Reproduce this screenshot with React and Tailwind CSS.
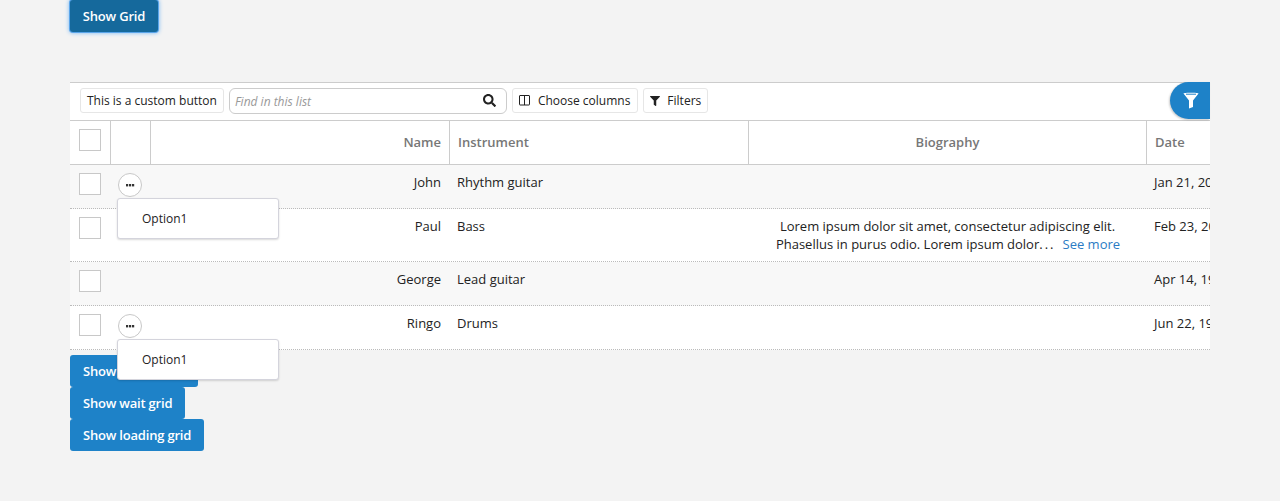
import { FaFilter, FaSearch } from 'react-icons/fa';

const ROWS = [
  { name: 'John', instrument: 'Rhythm guitar', date: 'Jan 21, 2014', menu: true, height: 'h-[44px]', bg: 'bg-[#f8f8f8]' },
  { name: 'Paul', instrument: 'Bass', date: 'Feb 23, 2014', bio: true, height: 'h-[53px]', bg: 'bg-white' },
  { name: 'George', instrument: 'Lead guitar', date: 'Apr 14, 1943', height: 'h-[44px]', bg: 'bg-[#f8f8f8]' },
  { name: 'Ringo', instrument: 'Drums', date: 'Jun 22, 1940', menu: true, height: 'h-[44px]', bg: 'bg-white' },
];

function ToolButton({ children }) {
  return (
    <button
      type="button"
      className="h-[25px] flex items-center rounded-[3px] border border-[#e6e6e6] bg-white px-[6px] text-[12px] text-[#222] whitespace-nowrap"
    >
      {children}
    </button>
  );
}

function Checkbox() {
  return <span className="block w-[22px] h-[22px] border border-[#c8c8c8] bg-white" />;
}

function RowMenu() {
  return (
    <>
      <button
        type="button"
        className="absolute left-[7px] top-[8px] w-[24px] h-[24px] flex items-center justify-center rounded-full border border-[#c8c8c8] bg-white"
      >
        <svg width="10" height="4" viewBox="0 0 10 4" fill="#333">
          <rect x="1" y="1" width="2.2" height="2.4" />
          <rect x="4" y="1" width="2.2" height="2.4" />
          <rect x="7" y="1" width="2.2" height="2.4" />
        </svg>
      </button>
      <div className="absolute z-10 left-[6px] top-[33px] w-[162px] h-[41px] flex items-center pl-[24px] rounded-[3px] border border-[#d4d4dc] bg-white text-[12px] text-[#222] shadow-[0_1px_2px_rgba(0,0,0,0.15)]">
        Option1
      </div>
    </>
  );
}

function HeaderCell({ className, children }) {
  return (
    <div className={`h-full flex items-center border-r border-[#ccc] text-[13px] font-semibold text-[#777] ${className}`}>
      {children}
    </div>
  );
}

export default function App() {
  return (
    <div className="min-h-[501px] bg-[#f3f3f3] pl-[70px] font-['Open_Sans',sans-serif]">
      <button
        type="button"
        className="block h-[32px] w-[88px] pt-px rounded-[3px] bg-[#15699c] text-[13px] font-semibold tracking-[-0.2px] text-white shadow-[0_0_0_1px_#5aa5ea,0_0_4px_1px_#7ab8f2]"
      >
        Show Grid
      </button>

      <div className="mt-[50px] w-[1140px]">
        {/* toolbar */}
        <div className="h-[39px] flex items-start gap-[5px] border-y border-[#ccc] bg-white pl-[10px] pt-[5px]">
          <ToolButton>This is a custom button</ToolButton>
          <div className="w-[278px] h-[26px] flex items-center justify-between rounded-[6px] border border-[#ccc] bg-white pl-[5px] pr-[10px]">
            <span className="pt-[2px] text-[12px] italic text-[#999]">Find in this list</span>
            <FaSearch size={13} color="#222" className="-mt-[2px]" />
          </div>
          <ToolButton>
            <svg width="12" height="11" viewBox="0 0 12 11" fill="none" stroke="#222" className="mr-[7px]">
              <rect x="0.5" y="0.5" width="10" height="9.5" rx="0.5" />
              <path d="M5.5 0.5V10" />
            </svg>
            <span className="pr-px">Choose columns</span>
          </ToolButton>
          <ToolButton>
            <FaFilter size={10} color="#222" className="mr-[7px]" />
            Filters
          </ToolButton>
          <button
            type="button"
            className="ml-auto -mt-[6px] w-[40px] h-[37px] flex items-center justify-center rounded-l-full bg-[#1e82c8] shadow-[-1px_1px_2px_rgba(0,0,0,0.2)]"
          >
            <svg width="16" height="17" viewBox="0 0 16 17" className="ml-[2px]">
              <path d="M0.5 1.5C0.5 0.5 15.5 0.5 15.5 1.5L10 8.5V15L6 16.5V8.5Z" fill="white" />
              <path d="M3 2.2H13" stroke="#1e82c8" strokeWidth="1" />
            </svg>
          </button>
        </div>

        {/* header */}
        <div className="h-[44px] flex border-b border-[#ccc] bg-white">
          <div className="w-[41px] h-full pl-[9px] pt-[8px] border-r border-[#ccc]">
            <Checkbox />
          </div>
          <HeaderCell className="w-[40px]" />
          <HeaderCell className="w-[299px] justify-end pr-[8px]">Name</HeaderCell>
          <HeaderCell className="w-[299px] pl-[8px]">Instrument</HeaderCell>
          <HeaderCell className="w-[398px] justify-center">Biography</HeaderCell>
          <div className="w-[63px] h-full flex items-center pl-[8px] text-[13px] font-semibold text-[#777]">Date</div>
        </div>

        {/* rows */}
        {ROWS.map((row) => (
          <div key={row.name} className={`relative flex border-b border-dotted border-[#bbb] text-[13px] leading-[18px] text-[#222] ${row.height} ${row.bg}`}>
            <div className="w-[41px] pl-[9px] pt-[8px]">
              <Checkbox />
            </div>
            <div className="relative w-[40px]">{row.menu && <RowMenu />}</div>
            <div className="w-[299px] pt-[8px] pr-[9px] text-right">{row.name}</div>
            <div className="w-[299px] pt-[8px] pl-[7px]">{row.instrument}</div>
            <div className="w-[398px] pt-[8px] text-center whitespace-nowrap">
              {row.bio && (
                <>
                  <div className="pr-[1px]">Lorem ipsum dolor sit amet, consectetur adipiscing elit.</div>
                  <div>
                    Phasellus in purus odio. Lorem ipsum dolor
                    <span className="tracking-[2px]">...</span>
                    <a href="#more" className="ml-[7px] text-[#2b7bc4]">See more</a>
                  </div>
                </>
              )}
            </div>
            <div className="w-[63px] pt-[8px] pl-[7px] overflow-hidden whitespace-nowrap">{row.date}</div>
          </div>
        ))}
      </div>

      <div className="mt-[5px] flex flex-col items-start">
        {['Show empty grid', 'Show wait grid', 'Show loading grid'].map((label) => (
          <button
            key={label}
            type="button"
            className="h-[32px] pt-px rounded-[3px] bg-[#1e82c8] px-[13px] text-[13px] font-semibold tracking-[-0.2px] text-white whitespace-nowrap"
          >
            {label}
          </button>
        ))}
      </div>
    </div>
  );
}
